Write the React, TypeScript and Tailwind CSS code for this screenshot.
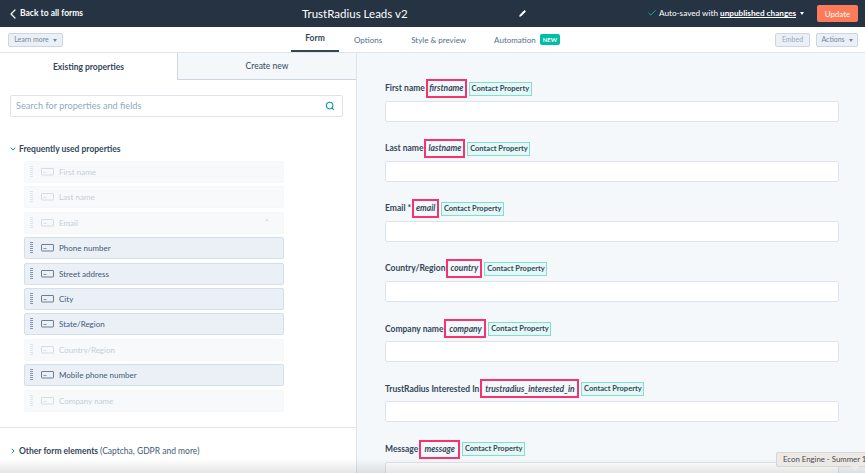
import { ChevronDown, ChevronLeft, ChevronRight, Check, Pencil, Search } from "lucide-react";

const properties = [
  { name: "First name", used: true },
  { name: "Last name", used: true },
  { name: "Email", used: true, required: true },
  { name: "Phone number" },
  { name: "Street address" },
  { name: "City" },
  { name: "State/Region" },
  { name: "Country/Region", used: true },
  { name: "Mobile phone number" },
  { name: "Company name", used: true },
];

const fields = [
  { label: "First name", prop: "firstname", w: "w-[41px]" },
  { label: "Last name", prop: "lastname", w: "w-[41px]" },
  { label: "Email *", prop: "email", w: "w-[27px]" },
  { label: "Country/Region", prop: "country", w: "w-[36px]" },
  { label: "Company name", prop: "company", w: "w-[42px]" },
  { label: "TrustRadius Interested In", prop: "trustradius_interested_in", w: "w-[99px]" },
  { label: "Message", prop: "message", w: "w-[41px]" },
];

function Caret() {
  return <span className="ml-1 inline-block border-x-[2.5px] border-t-[3px] border-x-transparent border-t-current align-middle" />;
}

function FieldIcon() {
  return (
    <svg width="13" height="8" viewBox="0 0 13 8" fill="none" className="shrink-0">
      <rect x="0.5" y="0.5" width="12" height="6.5" rx="0.5" stroke="currentColor" />
      <path d="M2.5 4.5h3" stroke="currentColor" strokeWidth="0.8" />
    </svg>
  );
}

function PropertyRow({ name, used, required }: { name: string; used?: boolean; required?: boolean }) {
  return (
    <div
      className={`relative flex h-[22px] items-center rounded-[2px] border pl-[5px] text-[8px] ${
        used ? "border-[#f5f8fa] bg-[#f8f9fb] text-[#c6ced8]" : "border-[#d3dfeb] bg-[#eaf0f6] text-[#425b76]"
      }`}
    >
      <span
        className={`h-[12px] w-[3px] bg-[repeating-linear-gradient(to_bottom,currentColor_0,currentColor_1px,transparent_1px,transparent_2px)] ${
          used ? "text-[#dde4ec]" : "text-[#7c98b6]"
        }`}
      />
      <span className={`ml-[8px] ${used ? "text-[#d5dce5]" : "text-[#6a7f95]"}`}>
        <FieldIcon />
      </span>
      <span className="ml-[5px]">{name}</span>
      {required && <span className="absolute left-[240px] top-[3px] text-[8px]">*</span>}
    </div>
  );
}

function FormField({ label, prop, w }: { label: string; prop: string; w: string }) {
  return (
    <div className="flex flex-col gap-[3px]">
      <div className="flex h-[19px] items-center text-[8.5px] font-bold text-[#33475b]">
        <span className="mr-[1px] whitespace-nowrap">{label}</span>
        <span className={`flex h-[19px] ${w} items-center justify-center whitespace-nowrap border-2 border-[#f5336f] text-[8.5px] font-bold italic`}>
          {prop}
        </span>
        <span className="ml-[2px] flex h-[14px] w-[63px] items-center justify-center whitespace-nowrap border border-[#7fdfd0] bg-[#e5f8f6] text-[7.5px] font-bold">
          Contact Property
        </span>
      </div>
      <div className="h-[21px] rounded-[2px] border border-[#dfe3eb] bg-white" />
    </div>
  );
}

export default function App() {
  return (
    <div className="relative flex h-[473px] w-[865px] flex-col overflow-hidden bg-white font-['Lato',sans-serif] text-[#33475b]">
      {/* Top bar */}
      <header className="flex h-[27px] shrink-0 items-center bg-[#253342] pl-[9px] pr-[7px] text-white">
        <div className="flex w-[290px] items-center text-[8.5px] font-bold">
          <ChevronLeft size={16} strokeWidth={1.8} className="-ml-[4px] -mr-[1px]" />
          Back to all forms
        </div>
        <div className="w-[220px] pl-[3px] text-[11.5px]">TrustRadius Leads v2</div>
        <Pencil size={7} fill="white" strokeWidth={2} />
        <div className="ml-[121px] flex items-center text-[8.2px]">
          <Check size={10} strokeWidth={2.2} className="mr-[2px] text-[#00bda5]" />
          <span>Auto-saved with&nbsp;</span>
          <span className="font-bold underline">unpublished changes</span>
          <Caret />
        </div>
        <button className="ml-auto h-[17px] w-[41px] rounded-[2px] bg-[#ff7a59] text-[8px]">Update</button>
      </header>

      {/* Sub nav */}
      <nav className="flex h-[26px] shrink-0 items-center border-b border-[#dfe3eb] pl-[8px] pr-[7px] text-[8px]">
        <button className="h-[14px] w-[55px] rounded-[2px] border border-[#cbd6e2] bg-[#eaf0f6] text-[7px] text-[#7288a0]">
          Learn more
          <Caret />
        </button>
        <div className="ml-[228px] flex h-full items-center">
          <span className="flex h-full w-[48px] items-center justify-center border-b-2 border-[#33475b] text-[8.5px] font-bold">Form</span>
          <span className="ml-[15px] text-[#516f90]">Options</span>
          <span className="ml-[29px] text-[#516f90]">Style &amp; preview</span>
          <span className="ml-[28px] text-[#516f90]">Automation</span>
          <span className="ml-[4px] rounded-[2px] bg-[#00bda5] px-[3px] py-[1px] text-[6px] font-bold text-white">NEW</span>
        </div>
        <button className="ml-auto h-[14px] w-[35px] rounded-[2px] border border-[#cbd6e2] bg-[#eaf0f6] text-[7px] text-[#94a9bf]">Embed</button>
        <button className="ml-[6px] h-[14px] w-[42px] rounded-[2px] border border-[#cbd6e2] bg-[#eaf0f6] text-[7px] text-[#7288a0]">
          Actions
          <Caret />
        </button>
      </nav>

      <div className="flex min-h-0 flex-1">
        {/* Left panel */}
        <aside className="flex w-[357px] shrink-0 flex-col border-r border-[#dfe3eb]">
          <div className="flex h-[27px] text-[8.5px]">
            <div className="flex w-[177px] items-center justify-center pt-[1px] font-bold">Existing properties</div>
            <div className="flex flex-1 items-center justify-center border-b border-l border-[#cbd6e2] bg-[#f5f8fa] pt-[1px]">Create new</div>
          </div>
          <div className="mx-[10px] mt-[15px] flex h-[22px] w-[333px] items-center justify-between rounded-[2px] border border-[#dfe3eb] bg-white pl-[5px] pr-[7px] text-[9.2px] text-[#94a9bf]">
            Search for properties and fields
            <Search size={10} strokeWidth={2.5} className="text-[#0091ae]" />
          </div>
          <div className="mt-[26px] flex items-center pl-[9px] text-[8.5px] font-bold">
            <ChevronDown size={8} strokeWidth={3} className="mr-[2px] text-[#0091ae]" />
            Frequently used properties
          </div>
          <div className="ml-[24px] mt-[5px] flex w-[260px] flex-col gap-[3.45px]">
            {properties.map((p) => (
              <PropertyRow key={p.name} {...p} />
            ))}
          </div>
          <div className="mt-[15px] flex items-center border-t border-[#dfe3eb] pl-[9px] pt-[17px] text-[8.5px]">
            <ChevronRight size={8} strokeWidth={3} className="mr-[2px] text-[#0091ae]" />
            <span className="font-bold">Other form elements</span>
            <span className="ml-[2px] text-[#425b76]">(Captcha, GDPR and more)</span>
          </div>
        </aside>

        {/* Form preview */}
        <main className="flex flex-1 flex-col gap-[17.1px] overflow-hidden bg-[#f5f8fa] pl-[28px] pr-[26px] pt-[26px]">
          {fields.map((f) => (
            <FormField key={f.prop} {...f} />
          ))}
        </main>
      </div>

      {/* Window shadow and dock tooltip lying over the page */}
      <div className="pointer-events-none absolute inset-x-0 bottom-0 h-[14px] bg-gradient-to-t from-black/10 to-transparent" />
      <div className="absolute left-[776px] top-[452px] flex h-[15px] w-[92px] items-center whitespace-nowrap rounded-[2px] border border-[#d8d6d2] bg-[#ece9e6] pl-[6px] text-[7.8px] text-[#4a4a4a]">
        Econ Engine - Summer 1
      </div>
      <div className="absolute left-[852px] top-[464px] h-[6px] w-[6px] rotate-45 bg-[#ece9e6]" />
    </div>
  );
}
